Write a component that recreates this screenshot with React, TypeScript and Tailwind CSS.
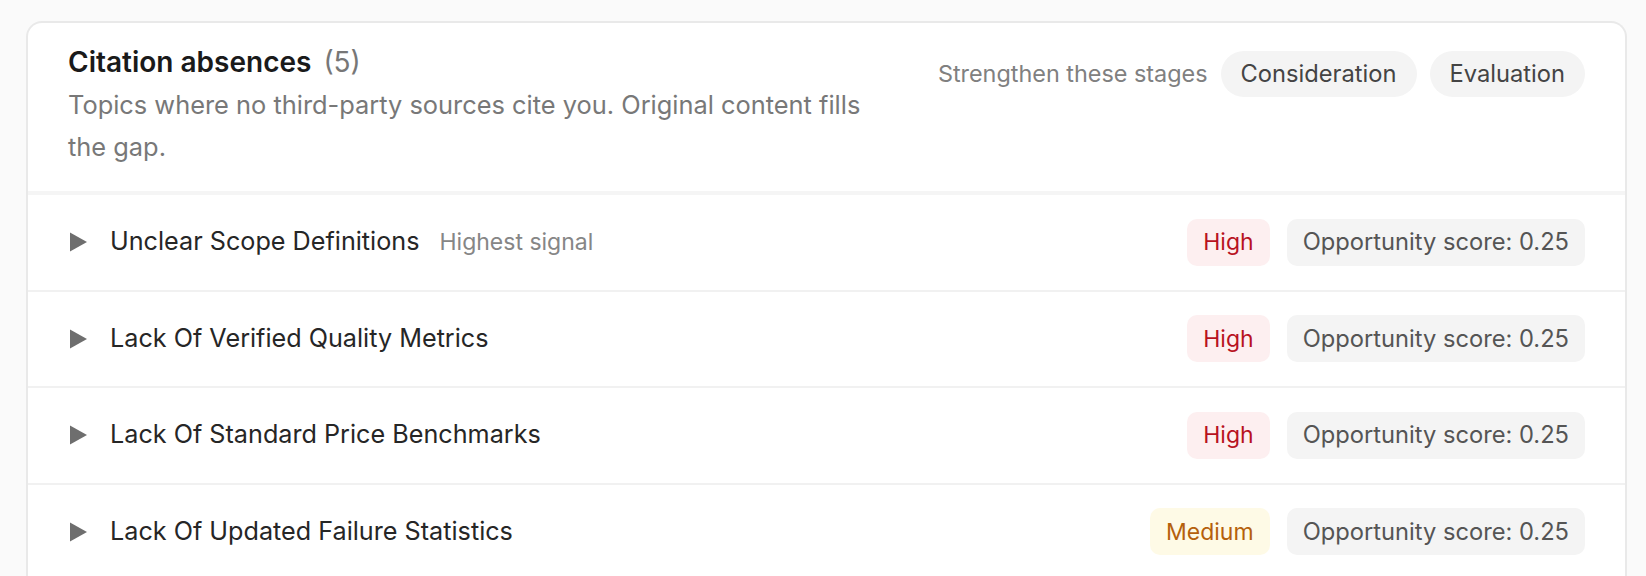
import React from "react";

type Gap = {
  topic: string;
  level: "High" | "Medium";
  score: string;
  highlight?: boolean;
};

const gaps: Gap[] = [
  { topic: "Unclear Scope Definitions", level: "High", score: "0.25", highlight: true },
  { topic: "Lack Of Verified Quality Metrics", level: "High", score: "0.25" },
  { topic: "Lack Of Standard Price Benchmarks", level: "High", score: "0.25" },
  { topic: "Lack Of Updated Failure Statistics", level: "Medium", score: "0.25" },
];

function Caret() {
  return (
    <svg width="20" height="20" viewBox="0 0 20 20" className="shrink-0">
      <path d="M2 0.5 L19 10 L2 19.5 Z" fill="#6e6e6e" />
    </svg>
  );
}

function LevelBadge({ level }: { level: Gap["level"] }) {
  if (level === "High") {
    return (
      <span className="flex h-[47px] items-center rounded-[10px] bg-[#fdeff0] px-4 text-[23px] text-[#b8121f]">
        High
      </span>
    );
  }
  return (
    <span className="flex h-[47px] items-center rounded-[10px] bg-[#fefae6] px-4 text-[23px] text-[#b5600c]">
      Medium
    </span>
  );
}

function GapRow({ gap }: { gap: Gap }) {
  return (
    <div className="flex h-[96.5px] items-center justify-between border-b-2 border-[#f1f1f1] px-10">
      <div className="flex items-center">
        <Caret />
        <span className="ml-[22px] text-[25.2px] text-[#262626]">{gap.topic}</span>
        {gap.highlight && (
          <span className="ml-[20px] text-[23px] text-[#868686]">Highest signal</span>
        )}
      </div>
      <div className="flex items-center gap-[17px]">
        <LevelBadge level={gap.level} />
        <span className="flex h-[47px] items-center rounded-[10px] bg-[#f4f4f4] px-4 text-[23.7px] text-[#555555]">
          Opportunity score: {gap.score}
        </span>
      </div>
    </div>
  );
}

export default function App() {
  return (
    <div
      className="min-h-screen bg-[#fafafa] pt-[21px] pl-[26px]"
      style={{ fontFamily: "Inter, 'Noto Sans', sans-serif" }}
    >
      <div className="w-[1601px] overflow-hidden rounded-t-2xl border-2 border-b-0 border-[#e9e9e9] bg-white">
        {/* Header */}
        <div className="flex items-start justify-between border-b-4 border-[#f5f5f5] px-10 pt-[21px] pb-[23px]">
          <div className="max-w-[830px]">
            <h2 className="flex items-baseline text-[28px] leading-[36px] font-semibold text-[#1a1a1a]">
              Citation absences
              <span className="ml-[12px] font-normal text-[#777777]">(5)</span>
            </h2>
            <p className="mt-1 text-[25.4px] leading-[42px] text-[#787878]">
              Topics where no third-party sources cite you. Original content fills the gap.
            </p>
          </div>
          <div className="mt-[7px] flex items-center gap-[13px]">
            <span className="text-[23.4px] text-[#808080]">Strengthen these stages</span>
            <span className="flex h-[46px] items-center rounded-full bg-[#f4f4f4] px-5 text-[23.7px] text-[#444444]">
              Consideration
            </span>
            <span className="flex h-[46px] items-center rounded-full bg-[#f4f4f4] px-5 text-[23.7px] text-[#444444]">
              Evaluation
            </span>
          </div>
        </div>

        {/* Rows */}
        {gaps.map((g) => (
          <GapRow key={g.topic} gap={g} />
        ))}
      </div>
    </div>
  );
}
